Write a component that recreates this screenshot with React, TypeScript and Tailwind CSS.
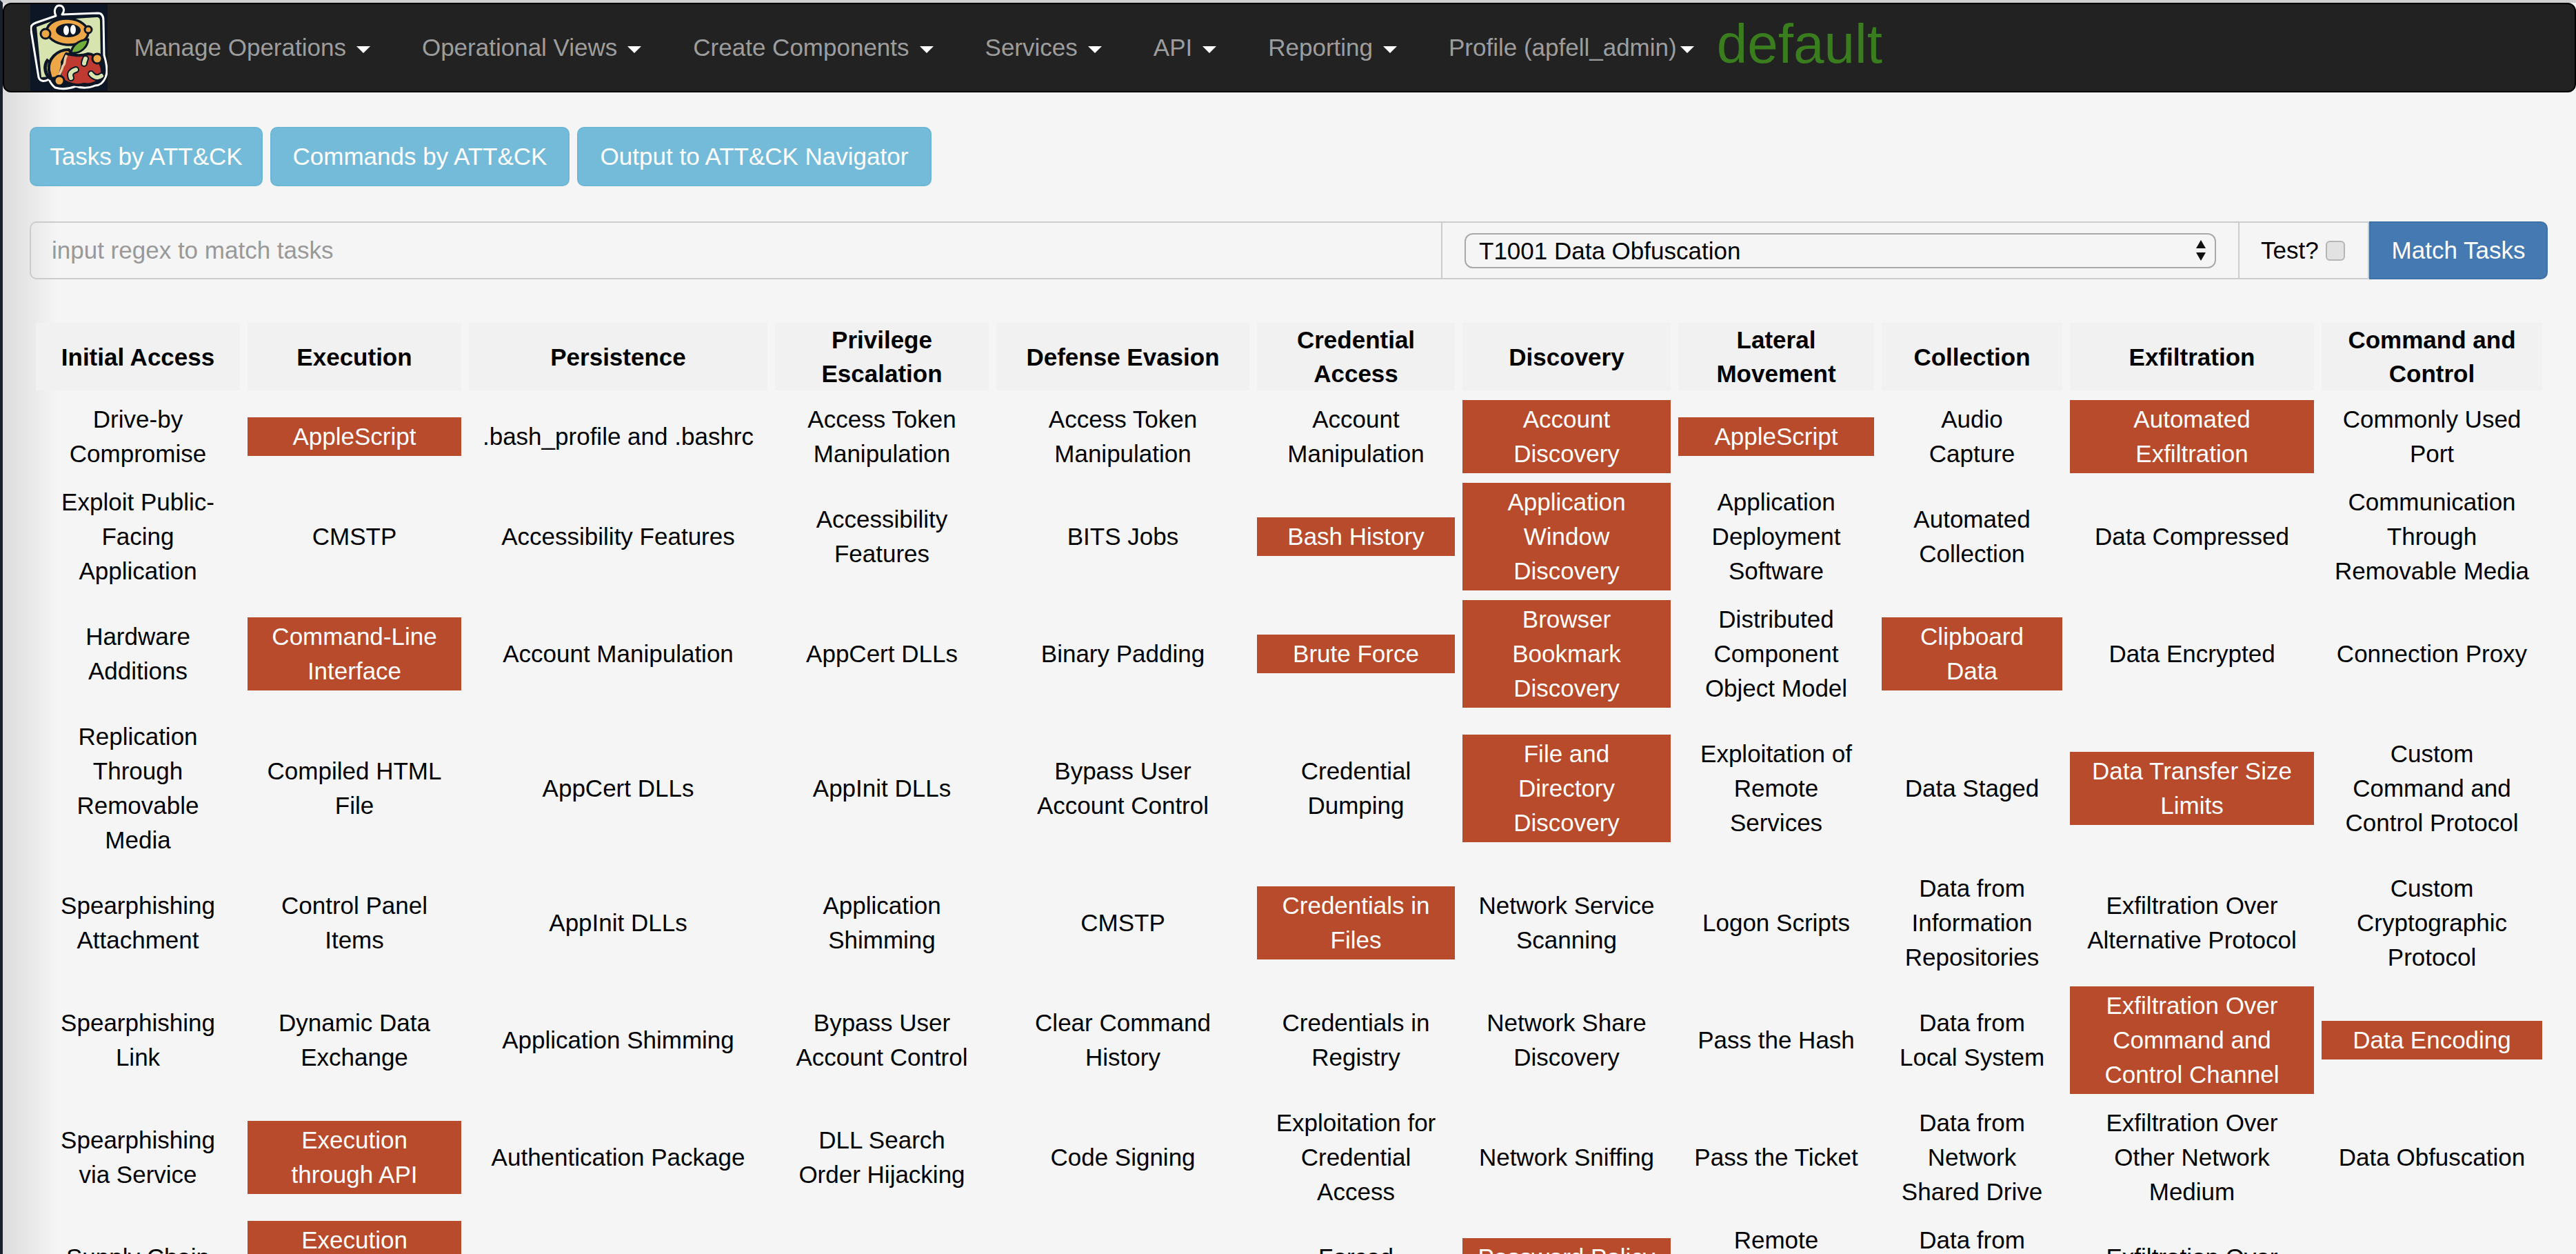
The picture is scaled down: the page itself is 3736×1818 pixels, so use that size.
import React from "react";

const widths = [296, 310, 433, 310, 367, 287, 302, 284, 262, 354, 320];

const headers = ["Initial Access", "Execution", "Persistence", "Privilege Escalation", "Defense Evasion", "Credential Access", "Discovery", "Lateral Movement", "Collection", "Exfiltration", "Command and Control"];

const rows: string[][] = [
  ["Drive-by Compromise", "*AppleScript", ".bash_profile and .bashrc", "Access Token Manipulation", "Access Token Manipulation", "Account Manipulation", "*Account Discovery", "*AppleScript", "Audio Capture", "*Automated Exfiltration", "Commonly Used Port"],
  ["Exploit Public-Facing Application", "CMSTP", "Accessibility Features", "Accessibility Features", "BITS Jobs", "*Bash History", "*Application Window Discovery", "Application Deployment Software", "Automated Collection", "Data Compressed", "Communication Through Removable Media"],
  ["Hardware Additions", "*Command-Line Interface", "Account Manipulation", "AppCert DLLs", "Binary Padding", "*Brute Force", "*Browser Bookmark Discovery", "Distributed Component Object Model", "*Clipboard Data", "Data Encrypted", "Connection Proxy"],
  ["Replication Through Removable Media", "Compiled HTML File", "AppCert DLLs", "AppInit DLLs", "Bypass User Account Control", "Credential Dumping", "*File and Directory Discovery", "Exploitation of Remote Services", "Data Staged", "*Data Transfer Size Limits", "Custom Command and Control Protocol"],
  ["Spearphishing Attachment", "Control Panel Items", "AppInit DLLs", "Application Shimming", "CMSTP", "*Credentials in Files", "Network Service Scanning", "Logon Scripts", "Data from Information Repositories", "Exfiltration Over Alternative Protocol", "Custom Cryptographic Protocol"],
  ["Spearphishing Link", "Dynamic Data Exchange", "Application Shimming", "Bypass User Account Control", "Clear Command History", "Credentials in Registry", "Network Share Discovery", "Pass the Hash", "Data from Local System", "*Exfiltration Over Command and Control Channel", "*Data Encoding"],
  ["Spearphishing via Service", "*Execution through API", "Authentication Package", "DLL Search Order Hijacking", "Code Signing", "Exploitation for Credential Access", "Network Sniffing", "Pass the Ticket", "Data from Network Shared Drive", "Exfiltration Over Other Network Medium", "Data Obfuscation"],
  ["Supply Chain Compromise", "*Execution through Module Load", "BITS Jobs", "Dylib Hijacking", "DCShadow", "Forced Authentication", "*Password Policy Discovery", "Remote Desktop Protocol", "Data from Removable Media", "Exfiltration Over Physical Medium", "Domain Fronting"],
];

const navItems = [
  { label: "Manage Operations", tight: false },
  { label: "Operational Views", tight: false },
  { label: "Create Components", tight: false },
  { label: "Services", tight: false },
  { label: "API", tight: false },
  { label: "Reporting", tight: false },
  { label: "Profile (apfell_admin)", tight: true },
];

function Logo() {
  const ink = "#0c1624";
  return (
    <svg viewBox="0 0 112 126" className="w-[112px] h-[126px] shrink-0" aria-hidden="true">
      <rect width="112" height="126" fill={ink} />
      <path d="M37 17 C33 9 37 2 42 2 C48 2 51 9 46 15 L98 13 C104 13 106 18 106 24 L107 74 C110 84 113 98 109 106 C106 114 100 118 94 118 C86 122 74 122 66 119 C58 122 46 124 36 121 C32 118 29 114 27 109 C20 113 14 112 12 106 L1 38 C0 31 3 29 8 27 Z" fill={ink} stroke="#ffffff" strokeWidth="3" strokeLinejoin="round" />
      <path d="M9 33 L36 23 L96 19 C100 19 101 21 101 25 L102 80 L40 104 L16 106 Z" fill="#d8e4b0" />
      <ellipse cx="54" cy="40" rx="30" ry="19" fill="#eea746" stroke={ink} strokeWidth="3.5" transform="rotate(4 54 40)" />
      <circle cx="22" cy="43" r="7" fill="#eea746" stroke={ink} strokeWidth="3" />
      <circle cx="84" cy="37" r="5" fill="#eea746" stroke={ink} strokeWidth="3" />
      <ellipse cx="55" cy="38" rx="18" ry="10" fill={ink} />
      <ellipse cx="52" cy="38" rx="4" ry="7" fill="#ffffff" />
      <ellipse cx="62" cy="37" rx="4" ry="7" fill="#ffffff" />
      <path d="M27 96 C25 80 38 66 56 66 L62 76 L46 106 L30 108 Z" fill="#eea746" stroke={ink} strokeWidth="4" strokeLinejoin="round" />
      <path d="M26 80 C18 90 22 104 30 108" fill="none" stroke={ink} strokeWidth="5" />
      <path d="M52 72 C64 74 72 76 84 72 C96 72 106 90 104 102 C102 112 90 118 78 116 C68 119 54 116 44 108 C40 100 48 94 46 84 Z" fill="#bf3a31" stroke={ink} strokeWidth="4" strokeLinejoin="round" />
      <path d="M53 74 C48 80 52 86 47 90 C46 96 42 100 42 104" fill="none" stroke="#e8c9a0" strokeWidth="3.5" />
      <path d="M59 71 C60 60 70 52 84 51 C83 62 74 72 59 71 Z" fill="#6fae3d" stroke={ink} strokeWidth="3" strokeLinejoin="round" />
      <path d="M80 79 C79 82 78 84 78 86" fill="none" stroke={ink} strokeWidth="10" strokeLinecap="round" />
      <path d="M80 79 C79 82 78 84 78 86" fill="none" stroke="#d8e4b0" strokeWidth="6" strokeLinecap="round" />
      <path d="M59 107 C56 100 60 97 66 95" fill="none" stroke={ink} strokeWidth="10" strokeLinecap="round" />
      <path d="M59 107 C56 100 60 97 66 95" fill="none" stroke="#d8e4b0" strokeWidth="6" strokeLinecap="round" />
      <path d="M88 101 C92 106 98 108 103 104" fill="none" stroke={ink} strokeWidth="10" strokeLinecap="round" />
      <path d="M88 101 C92 106 98 108 103 104" fill="none" stroke="#d8e4b0" strokeWidth="6" strokeLinecap="round" />
      <circle cx="97" cy="79" r="7" fill="#eea746" stroke={ink} strokeWidth="3" />
      <circle cx="42" cy="111" r="7" fill="#eea746" stroke={ink} strokeWidth="3" />
    </svg>
  );
}

function Caret({ className }: { className: string }) {
  return <span className={`inline-block w-0 h-0 border-x-[10px] border-x-transparent border-t-[10px] border-t-white align-middle ${className}`} />;
}

function Navbar() {
  return (
    <nav className="flex items-center h-[130px] bg-[#222222] border-2 border-black rounded-[12px]">
      <div className="ml-[38px]"><Logo /></div>
      <ul className="flex items-center ml-[1px]">
        {navItems.map((item) => (
          <li key={item.label} className={item.tight ? "pl-[37.5px] whitespace-nowrap text-[#9d9d9d]" : "px-[37.5px] whitespace-nowrap text-[#9d9d9d]"}>
            {item.label}
            <Caret className={item.tight ? "ml-[5px]" : "ml-[15px]"} />
          </li>
        ))}
      </ul>
      <h1 className="ml-[33px] text-[80px] leading-[100px] -mt-[10px] font-normal text-[#3a7d1e]">default</h1>
    </nav>
  );
}

function InfoButton({ label, width }: { label: string; width: string }) {
  return (
    <button className={`h-[86px] ${width} text-white bg-[#74bbd9] border-2 border-[#6cb6d6] rounded-[10px] whitespace-nowrap`}>
      {label}
    </button>
  );
}

function SearchGroup() {
  return (
    <div className="flex items-stretch h-[84px]">
      <input
        className="w-[2049px] px-[30px] bg-transparent border-2 border-[#cccccc] rounded-l-[10px] outline-none placeholder:text-[#999999]"
        placeholder="input regex to match tasks"
      />
      <div className="relative flex items-center w-[1156px] px-[32px] border-2 border-l-0 border-[#cccccc]">
        <select className="w-[1092px] h-[51px] pl-[19px] bg-transparent border-2 border-[#a9a9a9] rounded-[12px] appearance-none outline-none text-black text-[35px] leading-none">
          <option>T1001 Data Obfuscation</option>
        </select>
        <svg viewBox="0 0 16 32" className="absolute right-[46px] top-[24px] w-[16px] h-[32px]" aria-hidden="true">
          <path d="M8 1 L15 13 L1 13 Z M1 19 L15 19 L8 31 Z" fill="#111111" />
        </svg>
      </div>
      <div className="flex items-center w-[188px] pl-[31px] border-2 border-l-0 border-[#cccccc] text-black">
        <span>Test?</span>
        <input type="checkbox" className="ml-[10px] w-[28px] h-[29px] appearance-none bg-[#e2e2e2] border-2 border-[#b5b5b5] rounded-[6px]" />
      </div>
      <button className="w-[259px] text-white bg-[#4579b2] border-2 border-[#3f70a6] rounded-r-[10px]">Match Tasks</button>
    </div>
  );
}

function cellPad(c: number) {
  if (c === 8) return "px-[20px]";
  if (c === 10) return "px-[15px]";
  return "px-[19px]";
}

function Tactics() {
  return (
    <table className="table-fixed w-[3657px] -ml-[2px] mt-[49px] border-separate [border-spacing:11px_14px] text-center text-black">
      <colgroup>
        {widths.map((w, i) => (
          <col key={i} style={{ width: w }} />
        ))}
      </colgroup>
      <thead>
        <tr>
          {headers.map((h) => (
            <th key={h} className="px-[19px] py-0 bg-[#f1f1f1] font-bold leading-[49px]">{h}</th>
          ))}
        </tr>
      </thead>
      <tbody>
        {rows.map((row, r) => (
          <tr key={r}>
            {row.map((cell, c) => {
              const hit = cell.startsWith("*");
              return (
                <td key={c} className="p-0 align-middle">
                  <div className={`${cellPad(c)} py-[3px] ${hit ? "bg-[#b74b2c] text-white" : ""}`}>{hit ? cell.slice(1) : cell}</div>
                </td>
              );
            })}
          </tr>
        ))}
      </tbody>
    </table>
  );
}

export default function App() {
  return (
    <div className="h-[1818px] overflow-hidden bg-[linear-gradient(90deg,#dcdcdc,#f5f5f5_80px)] border-t-[4px] border-t-[#d0d0d0] border-l-[4px] border-l-[#18202e] font-['Liberation_Sans',Arial,sans-serif] text-[35px] leading-[50px]">
      <Navbar />
      <main className="pl-[39px] pr-[41px]">
        <div className="flex gap-[11px] pt-[50px] pb-[51px]">
          <InfoButton label="Tasks by ATT&CK" width="w-[338px]" />
          <InfoButton label="Commands by ATT&CK" width="w-[434px]" />
          <InfoButton label="Output to ATT&CK Navigator" width="w-[514px]" />
        </div>
        <SearchGroup />
        <Tactics />
      </main>
    </div>
  );
}
